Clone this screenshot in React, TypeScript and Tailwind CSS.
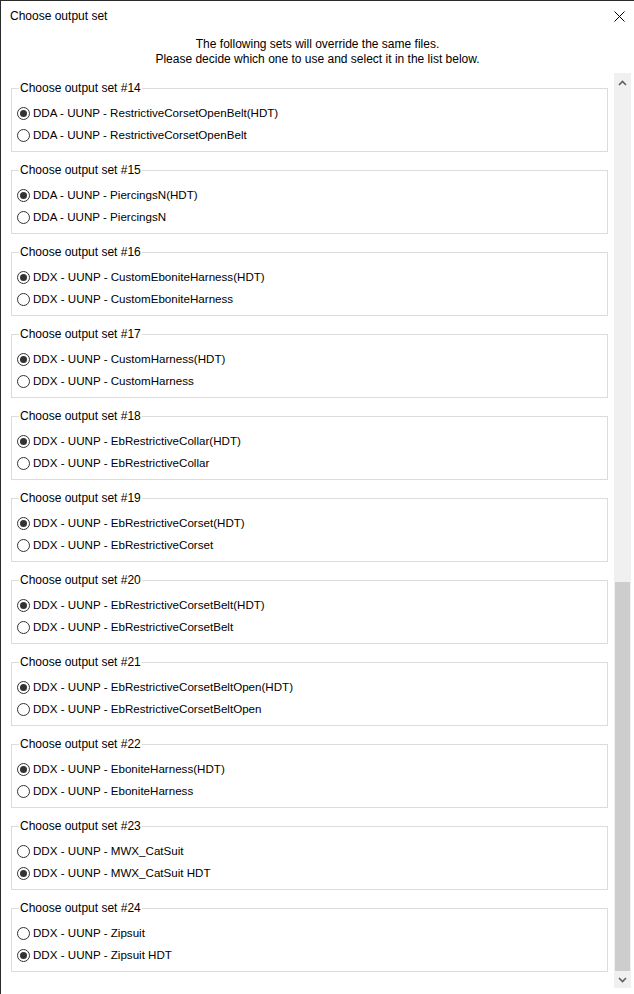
import React from 'react';

type OutputSet = {
  id: number;
  options: string[];
  selected: number;
};

const sets: OutputSet[] = [
  { id: 14, options: ['DDA - UUNP - RestrictiveCorsetOpenBelt(HDT)', 'DDA - UUNP - RestrictiveCorsetOpenBelt'], selected: 0 },
  { id: 15, options: ['DDA - UUNP - PiercingsN(HDT)', 'DDA - UUNP - PiercingsN'], selected: 0 },
  { id: 16, options: ['DDX - UUNP - CustomEboniteHarness(HDT)', 'DDX - UUNP - CustomEboniteHarness'], selected: 0 },
  { id: 17, options: ['DDX - UUNP - CustomHarness(HDT)', 'DDX - UUNP - CustomHarness'], selected: 0 },
  { id: 18, options: ['DDX - UUNP - EbRestrictiveCollar(HDT)', 'DDX - UUNP - EbRestrictiveCollar'], selected: 0 },
  { id: 19, options: ['DDX - UUNP - EbRestrictiveCorset(HDT)', 'DDX - UUNP - EbRestrictiveCorset'], selected: 0 },
  { id: 20, options: ['DDX - UUNP - EbRestrictiveCorsetBelt(HDT)', 'DDX - UUNP - EbRestrictiveCorsetBelt'], selected: 0 },
  { id: 21, options: ['DDX - UUNP - EbRestrictiveCorsetBeltOpen(HDT)', 'DDX - UUNP - EbRestrictiveCorsetBeltOpen'], selected: 0 },
  { id: 22, options: ['DDX - UUNP - EboniteHarness(HDT)', 'DDX - UUNP - EboniteHarness'], selected: 0 },
  { id: 23, options: ['DDX - UUNP - MWX_CatSuit', 'DDX - UUNP - MWX_CatSuit HDT'], selected: 1 },
  { id: 24, options: ['DDX - UUNP - Zipsuit', 'DDX - UUNP - Zipsuit HDT'], selected: 1 },
];

function Radio({ checked }: { checked: boolean }) {
  return (
    <span className="flex h-[13px] w-[13px] shrink-0 items-center justify-center rounded-full border border-[#333333] bg-white">
      {checked && <span className="h-[7px] w-[7px] rounded-full bg-[#333333]" />}
    </span>
  );
}

function GroupBox({ set }: { set: OutputSet }) {
  return (
    <div className="relative h-[64px] shrink-0 border border-[#dcdcdc] pl-[5px] pt-[16px]">
      {/* caption sits on the top border, like a classic group box */}
      <span className="absolute left-[7px] top-[-9px] bg-white px-[1px] leading-[16px]">
        Choose output set #{set.id}
      </span>
      <div className="flex flex-col gap-[6px]">
        {set.options.map((opt, i) => (
          <label key={opt} className="flex h-[16px] items-center gap-[3px]">
            <Radio checked={i === set.selected} />
            <span className="text-[11.6px] leading-[16px]">{opt}</span>
          </label>
        ))}
      </div>
    </div>
  );
}

function ScrollBar() {
  return (
    <div className="flex w-[17px] flex-col bg-[#f0f0f0]">
      <div className="flex h-[17px] shrink-0 items-center justify-center pt-[2px]">
        <svg width="9" height="6" viewBox="0 0 9 6">
          <path d="M1 5 L4.5 1.5 L8 5" fill="none" stroke="#606060" strokeWidth="1.6" />
        </svg>
      </div>
      <div className="flex flex-1 flex-col px-[1px]">
        <div className="flex-[492]" />
        <div className="flex-[389] bg-[#cdcdcd]" />
      </div>
      <div className="flex h-[17px] shrink-0 items-center justify-center">
        <svg width="9" height="6" viewBox="0 0 9 6">
          <path d="M1 1 L4.5 4.5 L8 1" fill="none" stroke="#606060" strokeWidth="1.6" />
        </svg>
      </div>
    </div>
  );
}

export default function App() {
  return (
    <div
      className="flex h-[994px] w-[634px] flex-col overflow-hidden border-l border-t border-[#2b2b2b] bg-white text-[12px] text-black"
      style={{ fontFamily: '"Liberation Sans", Arial, sans-serif' }}
    >
      <div className="flex h-[30px] shrink-0 items-center justify-between pl-[9px] pr-[9px]">
        <span>Choose output set</span>
        <svg width="11" height="11" viewBox="0 0 11 11">
          <path d="M0.5 0.5 L10.5 10.5 M10.5 0.5 L0.5 10.5" stroke="#000" strokeWidth="1" />
        </svg>
      </div>
      <div className="flex shrink-0 flex-col items-center pt-[6px] leading-[15px]">
        <span>The following sets will override the same files.</span>
        <span>Please decide which one to use and select it in the list below.</span>
      </div>
      <div className="mt-[6px] flex h-[915px] shrink-0 pr-[3px]">
        <div className="flex flex-1 flex-col gap-[18px] overflow-hidden pl-[10px] pr-[6px] pt-[15px]">
          {sets.map((s) => (
            <GroupBox key={s.id} set={s} />
          ))}
        </div>
        <ScrollBar />
      </div>
    </div>
  );
}
